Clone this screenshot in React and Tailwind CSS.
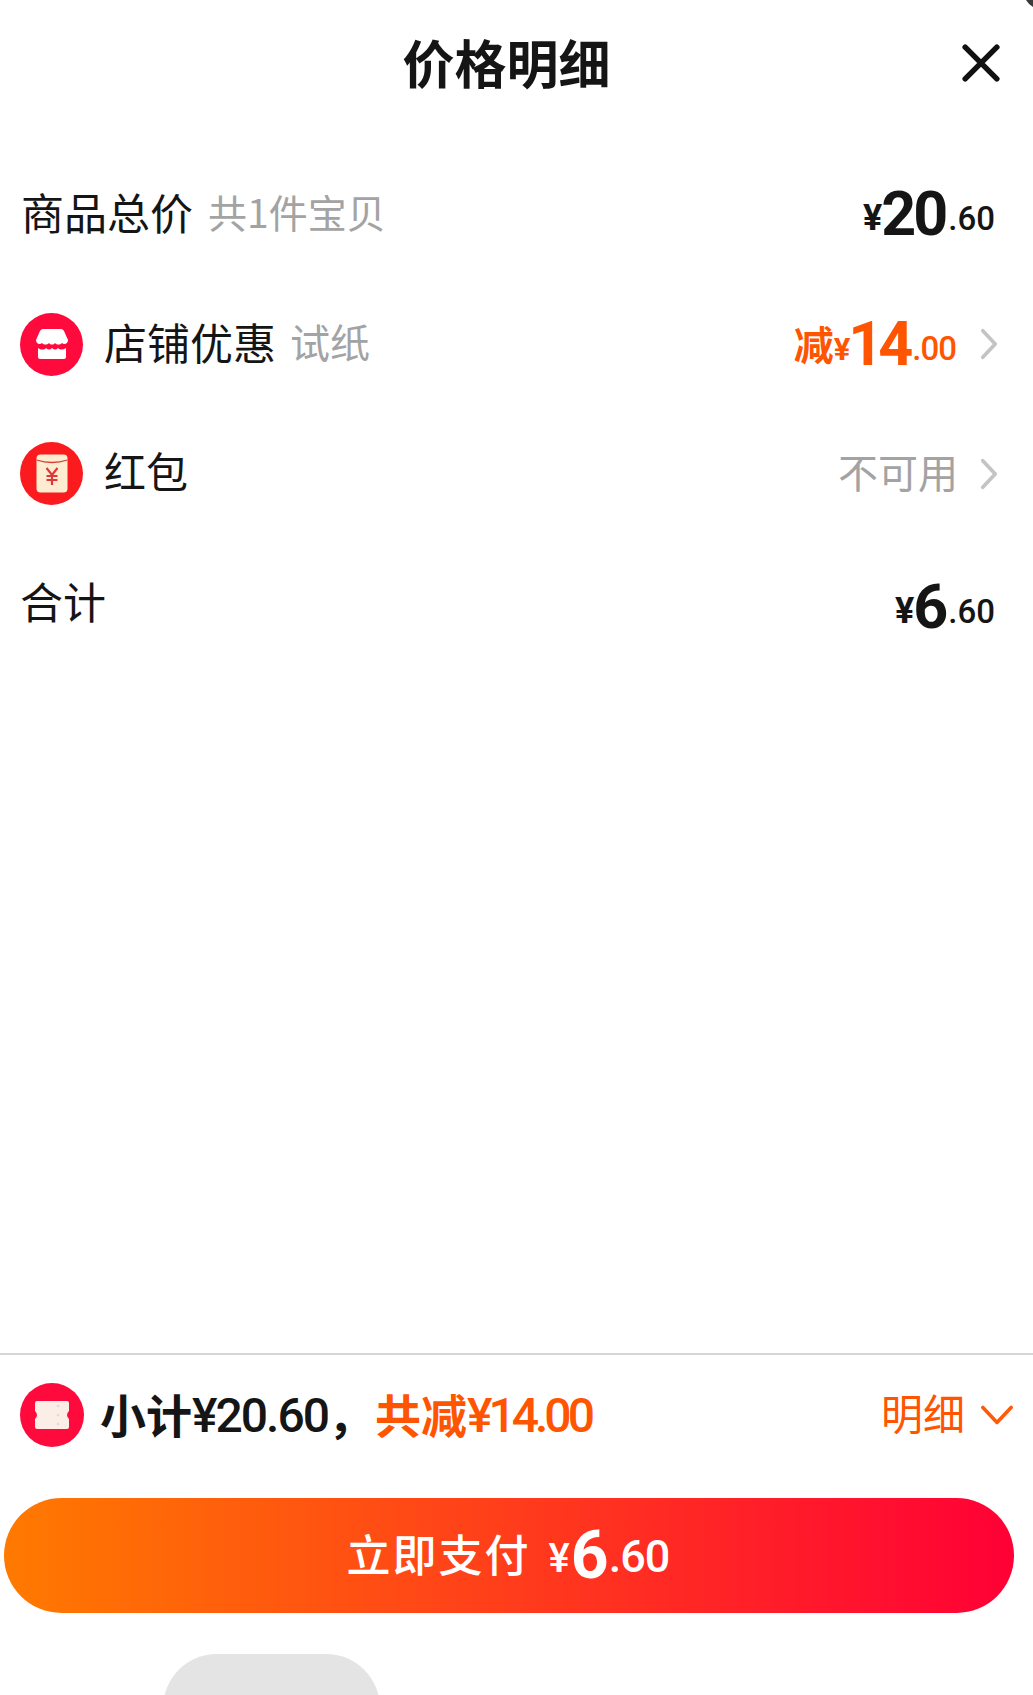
import React from 'react';

const CJK = "font-['Noto_Sans_CJK_SC','Noto_Sans',sans-serif]";
const NUM = "font-['Roboto','Noto_Sans_CJK_SC',sans-serif]";

const Chevron = ({ className = '' }) => (
  <svg viewBox="0 0 20 36" className={className} fill="none" stroke="#c4c4c4" strokeWidth="4.200" strokeLinecap="round" strokeLinejoin="round">
    <path d="M3 3 L17 18 L3 33" />
  </svg>
);

const ShopIcon = () => (
  <div className="flex h-[63px] w-[63px] shrink-0 items-center justify-center rounded-full bg-[#ff0a3c]">
    <svg viewBox="0 0 32 30" className="h-[30px] w-[32px]">
      <path d="M7 0 H25 Q27 0 28 2 L32 11 C32 15 28 16 26 14 C24 16 21 16 19 14 C17.500 16 14.500 16 13 14 C11 16 8 16 6 14 C4 16 0 15 0 11 L4 2 Q5 0 7 0 Z" fill="#fff" />
      <path d="M2 19 C5 21 8 21 10 19 C12 21 14 21 16 19 C18 21 20 21 22 19 C24 21 27 21 30 19 V28 Q30 30 28 30 H4 Q2 30 2 28 Z" fill="#fff" />
    </svg>
  </div>
);

const RedPacketIcon = () => (
  <div className="flex h-[63px] w-[63px] shrink-0 items-center justify-center rounded-full bg-[#fb1a1e]">
    <svg viewBox="0 0 32 39" className="h-[39px] w-[32px]">
      <rect x="0.500" y="0.500" width="31" height="38" rx="4" fill="#fdeccf" />
      <path d="M0.500 6 Q16 11 31.500 6" fill="none" stroke="#d9403a" strokeWidth="1.300" />
      <path d="M10.500 14 L16 21 L21.500 14 M10.500 22 H21.500 M10.500 26 H21.500 M16 21 V31" fill="none" stroke="#e0383a" strokeWidth="2.200" />
    </svg>
  </div>
);

const TicketIcon = () => (
  <div className="flex h-[64px] w-[64px] shrink-0 items-center justify-center rounded-full bg-[#ff0a3c]">
    <svg viewBox="0 0 34 28" className="h-[28px] w-[34px]">
      <path d="M2 0 H32 Q34 0 34 2 V10 Q30 14 34 18 V26 Q34 28 32 28 H2 Q0 28 0 26 V18 Q4 14 0 10 V2 Q0 0 2 0 Z" fill="#fbeee6" />
      <circle cx="23" cy="5" r="1.300" fill="#e9d6cc" />
      <circle cx="23" cy="14" r="1.300" fill="#e9d6cc" />
      <circle cx="23" cy="23" r="1.300" fill="#e9d6cc" />
    </svg>
  </div>
);

const Price = ({ big, dec }) => (
  <div className={`flex items-baseline font-bold leading-none text-[#151515] ${NUM}`}>
    <span className="mr-[1px] -translate-y-[5px] text-[36px] tracking-[-2px]">¥</span>
    <span className="text-[61px] tracking-[-3px]">{big}</span>
    <span className="ml-[3px] -translate-y-[5px] text-[33px] font-medium">{dec}</span>
  </div>
);

const App = () => {
  return (
    <div className={`relative flex h-[1695px] w-[1033px] flex-col overflow-hidden bg-white ${CJK}`}>
      {/* corner of the sheet behind */}
      <svg viewBox="0 0 8 8" className="absolute right-0 top-0 h-[8px] w-[8px]">
        <path d="M1 0 H8 V7 Q4 5 1 0 Z" fill="#3a3a3a" />
      </svg>

      {/* Title */}
      <div className="relative flex h-[130px] items-center justify-center pr-[20px]">
        <div className="-translate-y-[3px] text-[52px] font-bold leading-none text-[#151515]">价格明细</div>
        <svg viewBox="0 0 36 36" className="absolute right-[33px] top-[44px] h-[38px] w-[38px]" fill="none" stroke="#111" strokeWidth="5.200" strokeLinecap="round">
          <path d="M3 3 L33 33 M33 3 L3 33" />
        </svg>
      </div>

      {/* Rows */}
      <div className="flex h-[169px] items-center justify-between pl-[21px] pr-[38px]">
        <div className="flex -translate-y-[3px] items-center">
          <span className="text-[43px] leading-none text-[#151515]">商品总价</span>
          <span className="ml-[15px] text-[39px] leading-none text-[#a3a3a3]">共1件宝贝</span>
        </div>
        <Price big="20" dec=".60" />
      </div>

      <div className="flex h-[90px] items-center justify-between pl-[20px] pr-[35px]">
        <div className="flex items-center">
          <ShopIcon />
          <div className="flex -translate-y-[3px] items-center">
            <span className="ml-[21px] text-[43px] leading-none text-[#151515]">店铺优惠</span>
            <span className="ml-[14px] text-[40px] leading-none text-[#a3a3a3]">试纸</span>
          </div>
        </div>
        <div className="flex items-center">
          <div className={`flex items-baseline font-bold leading-none text-[#ff5500] ${NUM}`}>
            <span className={`-translate-y-[5px] text-[40px] ${CJK}`}>减</span>
            <span className="-translate-y-[5px] text-[31px] tracking-[-2px]">¥</span>
            <span className="text-[61px] tracking-[-5px]">14</span>
            <span className="ml-[4px] -translate-y-[5px] text-[33px] font-medium tracking-[-1px]">.00</span>
          </div>
          <Chevron className="ml-[24px] h-[32px] w-[18px]" />
        </div>
      </div>

      <div className="mt-[39px] flex h-[90px] items-center justify-between pl-[20px] pr-[35px]">
        <div className="flex items-center">
          <RedPacketIcon />
          <span className="ml-[21px] -translate-y-[3px] text-[42px] leading-none text-[#151515]">红包</span>
        </div>
        <div className="flex items-center">
          <span className="-translate-y-[2px] text-[40px] leading-none text-[#a3a3a3]">不可用</span>
          <Chevron className="ml-[22px] mt-[1px] h-[32px] w-[18px]" />
        </div>
      </div>

      <div className="mt-[44px] flex h-[90px] items-center justify-between pl-[20px] pr-[38px]">
        <span className="-translate-y-[7px] text-[43px] leading-none text-[#151515]">合计</span>
        <Price big="6" dec=".60" />
      </div>

      <div className="flex-1" />

      {/* Footer */}
      <div className="border-t-2 border-[#d6d6d6]">
        <div className="flex h-[143px] items-start justify-between pl-[20px] pr-[18px]">
          <div className="flex h-[120px] items-center">
            <TicketIcon />
            <div className="flex items-center">
              <span className="ml-[16px] -translate-y-[2px] text-[46px] font-bold leading-none text-[#151515]">小计</span>
              <span className={`translate-y-[1px] text-[48px] font-medium leading-none tracking-[-2px] text-[#151515] ${NUM}`}>¥20.60</span>
              <span className="-translate-y-[2px] text-[46px] font-bold leading-none text-[#151515]">，</span>
              <span className="ml-[1px] -translate-y-[2px] text-[46px] font-bold leading-none text-[#ff5500]">共减</span>
              <span className={`translate-y-[1px] text-[48px] font-medium leading-none tracking-[-4px] text-[#ff5500] ${NUM}`}>¥14.00</span>
            </div>
          </div>
          <div className="flex h-[120px] items-center text-[#ff5500]">
            <span className="-translate-y-[3px] text-[42px] leading-none">明细</span>
            <svg viewBox="0 0 34 22" className="ml-[16px] mr-[2px] h-[22px] w-[32px]" fill="none" stroke="#ff5a0a" strokeWidth="3.800" strokeLinecap="round" strokeLinejoin="round">
              <path d="M2 3 L17 19 L32 3" />
            </svg>
          </div>
        </div>

        <div className="ml-[4px] flex h-[115px] w-[1010px] items-center justify-center rounded-full bg-linear-to-r/srgb from-[#ff7a00] to-[#ff0036] pr-[2px] text-white">
          <span className="-translate-y-[3px] text-[44px] font-medium leading-none tracking-[2px]">立即支付</span>
          <div className={`ml-[18px] flex items-baseline font-medium leading-none ${NUM}`}>
            <span className="mr-[3px] -translate-y-[6px] text-[40px] tracking-[-2px]">¥</span>
            <span className="text-[66px] font-bold tracking-[-2px]">6</span>
            <span className="ml-[2px] -translate-y-[6px] text-[45px] tracking-[-1px]">.60</span>
          </div>
        </div>

        <div className="mb-[-60px] ml-[163px] mt-[41px] h-[101px] w-[217px] rounded-t-[54px] bg-[#e4e4e4]" />
      </div>
    </div>
  );
};

export default App;
